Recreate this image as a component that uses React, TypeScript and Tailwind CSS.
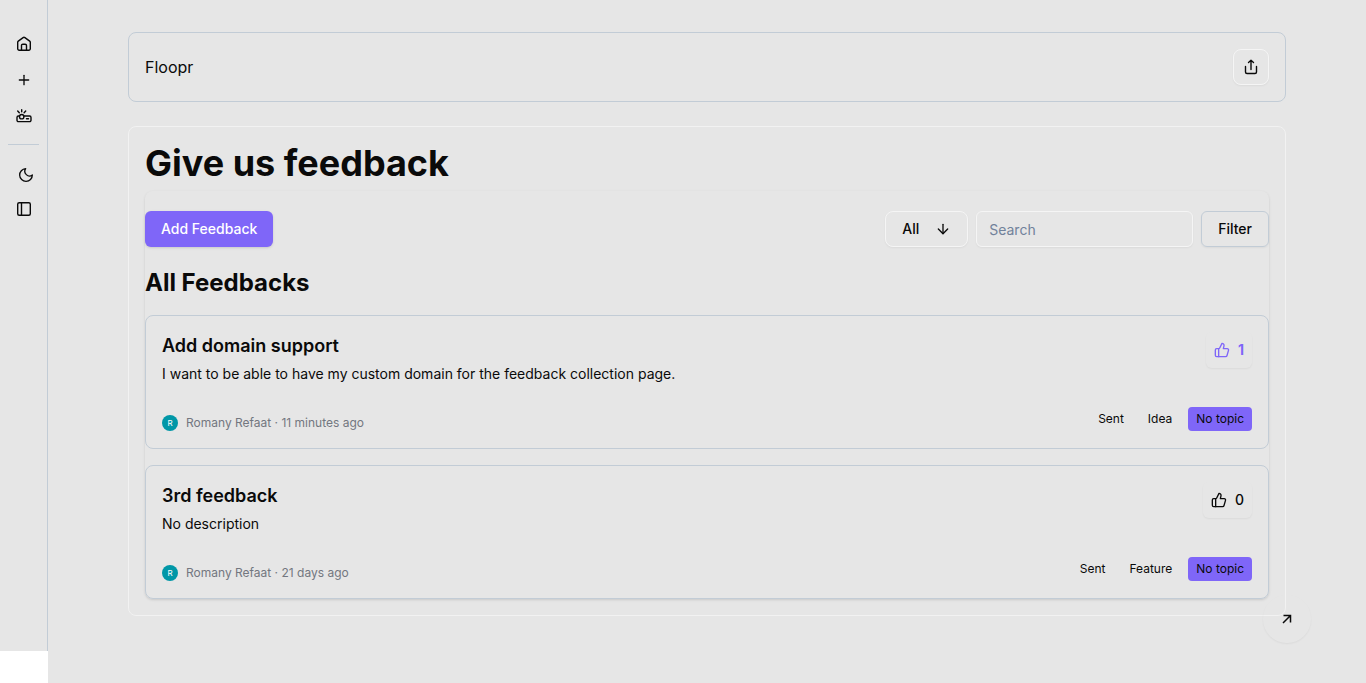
import { useState } from "react";
import { Plus, ArrowDown, ThumbsUp } from "lucide-react";

type Feedback = {
  title: string;
  description: string;
  author: string;
  time: string;
  kind: string;
  votes: number;
  voted: boolean;
};

const feedbacks: Feedback[] = [
  {
    title: "Add domain support",
    description: "I want to be able to have my custom domain for the feedback collection page.",
    author: "Romany Refaat",
    time: "11 minutes ago",
    kind: "Idea",
    votes: 1,
    voted: true,
  },
  {
    title: "3rd feedback",
    description: "No description",
    author: "Romany Refaat",
    time: "21 days ago",
    kind: "Feature",
    votes: 0,
    voted: false,
  },
];

function HomeIcon() {
  return (
    <svg viewBox="0 0 16 16" className="size-4" fill="none" stroke="currentColor" strokeWidth="1.4" strokeLinecap="round" strokeLinejoin="round" aria-hidden="true">
      <path d="M1.700 6.300a1.500 1.500 0 0 1 .6-1.200l4.800-3.500a1.500 1.500 0 0 1 1.800 0l4.800 3.500a1.500 1.500 0 0 1 .6 1.200v6.500a1.500 1.500 0 0 1-1.500 1.500H3.200a1.500 1.500 0 0 1-1.500-1.500z" />
      <path d="M5.500 14.200V9.500A1.300 1.300 0 0 1 6.800 8.200h2.400a1.300 1.300 0 0 1 1.300 1.300v4.700" />
    </svg>
  );
}

function MoonIcon() {
  return (
    <svg viewBox="0 0 24 24" className="size-4" fill="none" stroke="currentColor" strokeWidth="2" strokeLinecap="round" strokeLinejoin="round" aria-hidden="true">
      <path d="M11.500 2.500a7 7 0 0 0 10 9.500 9.500 9.500 0 1 1-10-9.500Z" />
    </svg>
  );
}

function RouterIcon() {
  return (
    <svg viewBox="0 0 16 16" className="size-4" fill="none" stroke="currentColor" strokeWidth="1.400" strokeLinecap="round" strokeLinejoin="round" aria-hidden="true">
      <path d="M3.300 8H2.400A1.400 1.400 0 0 0 1 9.400v2.800a1.400 1.400 0 0 0 1.400 1.400h11.200a1.400 1.400 0 0 0 1.400-1.400V9.400A1.400 1.400 0 0 0 13.600 8H8" />
      <circle cx="5.700" cy="8.700" r="2.200" />
      <path d="M5.700 1.700v2M1.700 3l1.600 1.800M9.700 3L8.100 4.800M10.500 10.700h2" />
    </svg>
  );
}

function PanelIcon() {
  return (
    <svg viewBox="0 0 16 16" className="size-4" fill="none" stroke="currentColor" strokeWidth="1.400" aria-hidden="true">
      <rect x="1.700" y="1.700" width="12.600" height="12.600" rx="1.500" />
      <path d="M5.500 1.700v12.600" />
    </svg>
  );
}

function ShareIcon() {
  return (
    <svg viewBox="0 0 16 16" className="size-4" fill="none" stroke="currentColor" strokeWidth="1.400" strokeLinecap="round" strokeLinejoin="round" aria-hidden="true">
      <path d="M8 10.500V1.500M5.500 3.500L8 1.300 10.500 3.500M2.500 7.500v5.500A1.500 1.500 0 0 0 4 14.500h8a1.500 1.500 0 0 0 1.500-1.500V7.500" />
    </svg>
  );
}

function Sidebar() {
  const item = "flex size-9 items-center justify-center";
  return (
    <aside className="sticky top-0 h-[calc(100vh-32px)] w-12 shrink-0 border-r border-[#c2ccd6] bg-[#e6e6e6] px-2 pt-[26px]">
      <nav aria-label="Main" className="flex flex-col items-center">
        <a href="#home" aria-label="Home" className={item}>
          <HomeIcon />
        </a>
        <a href="#new" aria-label="New" className={item}>
          <Plus className="size-4" />
        </a>
        <a href="#projects" aria-label="Projects" className={item}>
          <RouterIcon />
        </a>
      </nav>
      <hr className="mt-2.5 mb-3 border-[#c2ccd6]" />
      <div className="flex flex-col items-center">
        <button type="button" aria-label="Theme" className="flex h-9 w-9 items-center justify-center pl-1">
          <MoonIcon />
        </button>
        <button type="button" aria-label="Toggle sidebar" className="flex h-8 w-9 items-center justify-center">
          <PanelIcon />
        </button>
      </div>
    </aside>
  );
}

function FeedbackCard({ item }: { item: Feedback }) {
  const [voted, setVoted] = useState(item.voted);
  const votes = item.votes + (voted ? 1 : 0) - (item.voted ? 1 : 0);
  return (
    <article className="flex flex-col gap-[23px] rounded-lg border border-[#c2ccd6] px-4 pt-4 pb-[17px]">
      <div className="flex items-start justify-between">
        <div>
          <h3 className="text-lg font-semibold leading-7">{item.title}</h3>
          <p className="pt-1 text-sm">{item.description}</p>
        </div>
        <button
          type="button"
          aria-pressed={voted}
          onClick={() => setVoted(!voted)}
          className={
            voted
              ? "flex h-9 items-center gap-2 rounded-md px-2 text-sm font-bold text-[#7f66f8] shadow-xs"
              : "flex h-9 items-center gap-2 rounded-md px-2 text-sm font-medium shadow-xs"
          }
        >
          <ThumbsUp className="size-4" />
          {votes}
        </button>
      </div>
      <div className="flex items-end justify-between text-xs">
        <div className="flex items-center gap-2 text-[#737780]">
          <span className="flex size-4 items-center justify-center rounded-full bg-[#0097a7] text-[8px] text-white">R</span>
          <span>{item.author} · {item.time}</span>
        </div>
        <div className="flex items-center gap-2">
          <span className="px-2">Sent</span>
          <span className="px-2">{item.kind}</span>
          <span className="rounded bg-[#7f66f8] px-2 py-1">No topic</span>
        </div>
      </div>
    </article>
  );
}

export default function App() {
  return (
    <div className="flex min-h-screen bg-white font-['Inter',sans-serif] text-[#0a0a0a]">
      <Sidebar />
      <main className="min-w-0 grow bg-[#e6e6e6] px-20 pt-8 pb-16">
        <header className="mb-6 flex items-center justify-between rounded-lg border border-[#c2ccd6] p-4">
          <span>Floopr</span>
          <button type="button" aria-label="Share" className="flex size-9 items-center justify-center rounded-lg border border-[#f5f5f5] shadow-xs">
            <ShareIcon />
          </button>
        </header>
        <section className="relative rounded-lg border border-[#f2f2f2] p-4">
          <h1 className="text-4xl font-bold leading-10">Give us feedback</h1>
          <div className="mt-2 rounded-lg pt-5 shadow-sm">
            <div className="flex items-center justify-between">
              <button type="button" className="h-9 rounded-md bg-[#7f66f8] px-4 text-sm font-medium text-white shadow-sm">
                Add Feedback
              </button>
              <div className="flex items-center gap-2">
                <button type="button" className="flex h-9 items-center gap-4 rounded-lg border border-[#f5f5f5] px-4 text-sm font-medium shadow-xs">
                  All
                  <ArrowDown className="size-4" />
                </button>
                <input aria-label="Search" placeholder="Search" className="h-9 w-[217px] rounded-md border border-[#f5f5f5] px-3 text-sm shadow-xs placeholder:text-[#71829b]" />
                <button type="button" className="h-9 rounded-md border border-[#c2ccd6] px-4 text-sm font-medium shadow-xs">
                  Filter
                </button>
              </div>
            </div>
            <h2 className="pt-5 pb-4 text-2xl font-bold leading-8">All Feedbacks</h2>
            <div className="flex flex-col gap-4">
              {feedbacks.map((f) => (
                <FeedbackCard key={f.title} item={f} />
              ))}
            </div>
          </div>
          <a href="#open" aria-label="Open" className="absolute -right-[26px] -bottom-[28px] flex size-12 items-center justify-center rounded-full shadow-xs">
            <svg viewBox="0 0 16 16" className="size-4" fill="none" stroke="currentColor" strokeWidth="1.500" aria-hidden="true">
              <path d="M4 12l7.500-7.500M4.500 4.500h7v7" />
            </svg>
          </a>
        </section>
      </main>
    </div>
  );
}
